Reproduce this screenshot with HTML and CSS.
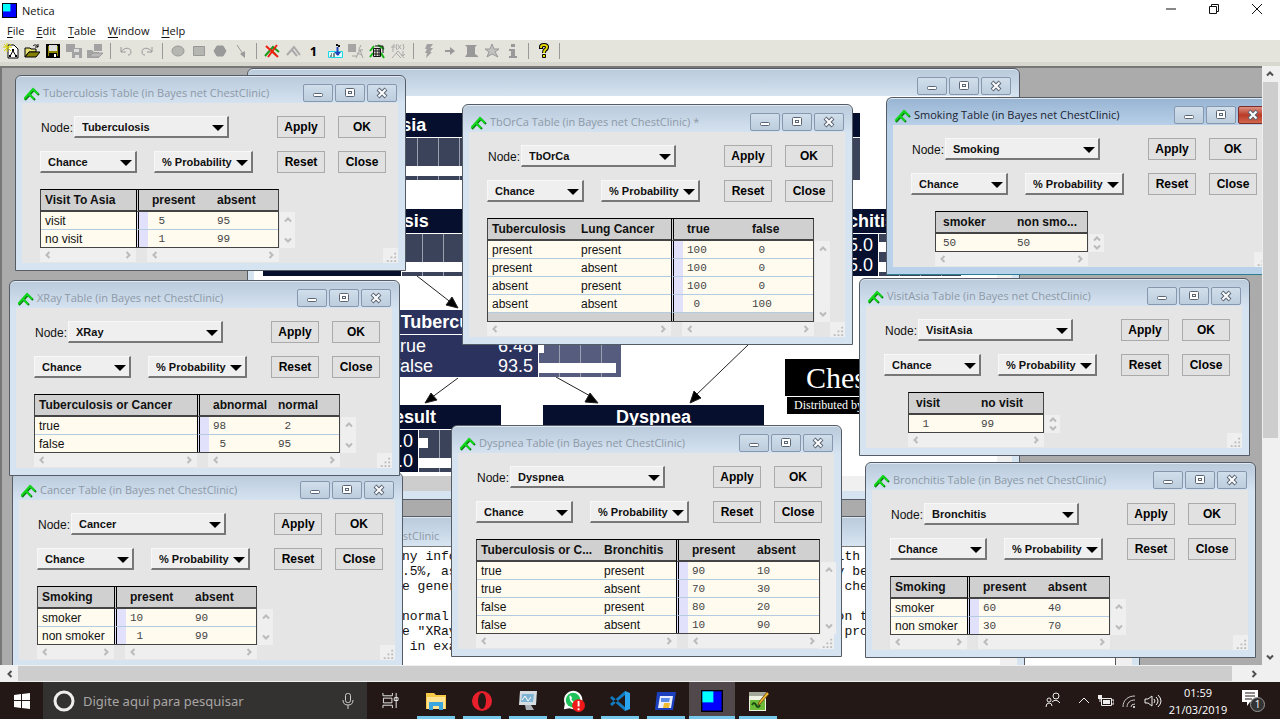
FILE: index.html
```html
<!DOCTYPE html>
<html lang="en">
<head>
<meta charset="utf-8">
<title>Netica</title>
<link rel="stylesheet" href="styles.css">
</head>
<body>
<svg class="defs" aria-hidden="true">
  <symbol id="net" viewBox="0 0 16 14"><path d="M1 13 10 3l5 5M6 8l5 5" fill="none" stroke="#0a7d12" stroke-width="2"/><path d="M0 12 9 2l5 5M5 7l5 5" fill="none" stroke="#12d81c" stroke-width="2"/></symbol>
  <symbol id="min" viewBox="0 0 16 12"><rect x="3.500" y="6.500" width="9" height="3" rx="1" fill="#fff" stroke="#5b6473"/></symbol>
  <symbol id="max" viewBox="0 0 16 12"><rect x="3.500" y="1.500" width="9" height="8" rx="1" fill="#fff" stroke="#5b6473"/><rect x="6.500" y="4.500" width="3" height="2" fill="#fff" stroke="#5b6473"/></symbol>
  <symbol id="cls" viewBox="0 0 16 12"><path d="M4 2l8 8M12 2l-8 8" stroke="#5b6473" stroke-width="4"/><path d="M4.500 2.500l7 7M11.500 2.500l-7 7" stroke="#fff" stroke-width="2"/></symbol>
  <symbol id="lt" viewBox="0 0 8 8"><path d="M5.500 1 2.500 4l3 3" fill="none" stroke="currentColor" stroke-width="2"/></symbol>
  <symbol id="rt" viewBox="0 0 8 8"><path d="M2.500 1l3 3-3 3" fill="none" stroke="currentColor" stroke-width="2"/></symbol>
  <symbol id="up" viewBox="0 0 8 8"><path d="M1 5.500l3-3 3 3" fill="none" stroke="currentColor" stroke-width="2"/></symbol>
  <symbol id="dn" viewBox="0 0 8 8"><path d="M1 2.500l3 3 3-3" fill="none" stroke="currentColor" stroke-width="2"/></symbol>
  <symbol id="grip" viewBox="0 0 16 16"><path d="M12 5h2v2h-2zM12 9h2v2h-2zM12 13h2v2h-2zM8 9h2v2H8zM8 13h2v2H8zM4 13h2v2H4z" fill="#bbb"/></symbol>
  <symbol id="netica" viewBox="0 0 16 16"><path d="M0 0h16v16H0z" fill="#000"/><path d="M1 1h14v14H1z" fill="#00f"/><path d="M1 1h8v8H1z" fill="#0ff"/></symbol>
</svg>

<header class="titlebar">
  <svg class="app-icon"><use href="#netica"/></svg>
  <span class="app-name">Netica</span>
  <div class="sys">
    <button aria-label="Minimize"><svg viewBox="0 0 12 12"><path d="M1 6h10" stroke="#111"/></svg></button>
    <button aria-label="Restore"><svg viewBox="0 0 12 12"><path d="M1.500 3.500h7v7h-7zM3.500 3.500v-2h7v7h-2" fill="none" stroke="#111"/></svg></button>
    <button aria-label="Close"><svg viewBox="0 0 12 12"><path d="M1 1l10 10M11 1 1 11" stroke="#111"/></svg></button>
  </div>
</header>
<nav class="menu">
  <button><u>F</u>ile</button><button><u>E</u>dit</button><button><u>T</u>able</button><button><u>W</u>indow</button><button><u>H</u>elp</button>
</nav>
<div class="toolbar">
  <button aria-label="New"><svg viewBox="0 0 16 16"><path d="M5 2h6l4 4v9H5z" fill="#fff" stroke="#000"/><path d="M7 13l3-5 3 5" fill="none" stroke="#000"/><path d="M9 6h2v2H9zM6 12h2v2H6zM12 12h2v2h-2z"/><path d="M1 1l7 7M8 1 1 8M4 0v9M0 4h9" stroke="#d6d000"/></svg></button>
  <button aria-label="Open"><svg viewBox="0 0 16 16"><path d="M1 5h5l1 1h5v3H5l-4 5z" fill="#e6e070" stroke="#000"/><path d="M1 14l4-5h11l-4 5z" fill="#868000" stroke="#000"/><path d="M9 3c2-2 4-1 5 1M14 1v3h-3" fill="none" stroke="#000"/></svg></button>
  <button aria-label="Save"><svg viewBox="0 0 16 16"><path d="M2 2h12v12H2z" fill="#8a8600" stroke="#000" stroke-width="2"/><path d="M4 2h8v6H4z" fill="#ddd"/><path d="M4 10h8v4H4z" fill="#000"/><path d="M9 11h2v3H9z" fill="#fff"/></svg></button>
  <button aria-label="Save all"><svg viewBox="0 0 16 16"><path d="M0 1h9v8H0zM6 5h10v10H6z" fill="#a3a3a3"/><path d="M8 6h5v3H8zM9 12h4v3H9z" fill="#ddd"/></svg></button>
  <button aria-label="Open all"><svg viewBox="0 0 16 16"><path d="M0 7h5l2 2h5v6H0zM7 1h8v7H7z" fill="#a3a3a3"/><path d="M2 14l4-4h10l-4 4z" fill="#b9b9b9" stroke="#999"/></svg></button>
  <i></i>
  <button aria-label="Undo"><svg viewBox="0 0 16 16"><path d="M3 4v5h5M3 9c3-5 10-5 10 0 0 2-1 3-3 3" fill="none" stroke="#999"/></svg></button>
  <button aria-label="Redo"><svg viewBox="0 0 16 16"><path d="M13 4v5H8M13 9C10 4 3 4 3 9c0 2 1 3 3 3" fill="none" stroke="#999"/></svg></button>
  <i></i>
  <button aria-label="Nature node"><svg viewBox="0 0 16 16"><ellipse cx="8" cy="8" rx="6" ry="5" fill="#b5b5b1" stroke="#999"/></svg></button>
  <button aria-label="Decision node"><svg viewBox="0 0 16 16"><path d="M2.500 3.500h11v9h-11z" fill="#b5b5b1" stroke="#999"/></svg></button>
  <button aria-label="Utility node"><svg viewBox="0 0 16 16"><path d="M5 3h6l3 5-3 5H5L2 8z" fill="#999" stroke="#999"/></svg></button>
  <button aria-label="Link"><svg viewBox="0 0 16 16"><path d="M4 2l6 9" stroke="#999"/><path d="M12 8v7l-5-4z" fill="#999"/></svg></button>
  <i></i>
  <button aria-label="Remove findings"><svg viewBox="0 0 16 16"><path d="M1 13 9 4l6 5M7 7l5 5" fill="none" stroke="#1b991b" stroke-width="2"/><path d="M2 3l12 11M13 2 4 14" stroke="#f02010" stroke-width="2"/></svg></button>
  <button aria-label="Compile"><svg viewBox="0 0 16 16"><path d="M2 12l7-8 6 8M7 7l5 6" fill="none" stroke="#aaa" stroke-width="2"/></svg></button>
  <button class="one">1</button>
  <button aria-label="Sample"><svg viewBox="0 0 16 16"><path d="M1.500 8.500h14v6h-14z" fill="#dff" stroke="#1cd8e6"/><path d="M4 12v2M7 10v4M4 11h1" stroke="#222"/><path d="M10.500 4v8" stroke="#24b" stroke-width="2"/><path d="M7 9h7l-3 4z" fill="#24b"/><path d="M9 1h2v2H9zM11 2h2v2h-2z" fill="#111"/></svg></button>
  <button aria-label="Learn"><svg viewBox="0 0 16 16"><path d="M0 1h8v8H0z" fill="#a5a5a5"/><path d="M8 15l4-8 3 8M10 7h5M9 10l5 2M4 13h5M13 2l-2 4" fill="none" stroke="#a5a5a5"/></svg></button>
  <button aria-label="Equation"><svg viewBox="0 0 16 16"><path d="M1 14l3-4M12 10l3 5M1 8l4-5M9 2l6 4" stroke="#14b414" stroke-width="2"/><path d="M4.500 5.500h7v8h-7zM4 8h8M4 11h8M7 5v8M10 5v8M6 3h8v7" fill="none" stroke="#111"/></svg></button>
  <button aria-label="Function"><svg viewBox="0 0 16 16"><path d="M3 9V3q0-2 2-1M1 4h4M7 1q-2 3 0 6M8 2l3 4M11 2 8 6M13 1q2 3 0 6M2 15l6-7 6 7M6 10l5 5M13 8v5M11 11l2 2 2-2" fill="none" stroke="#aaa"/></svg></button>
  <i></i>
  <button aria-label="Run"><svg viewBox="0 0 16 16"><path d="M6 1h6L9 5h3l-3 4h2l-6 6 1-5H4l2-4H4z" fill="#a0a0a0"/></svg></button>
  <button aria-label="Forward"><svg viewBox="0 0 16 16"><path d="M3 8h6" stroke="#999" stroke-width="2"/><path d="M8 4l5 4-5 4z" fill="#999"/></svg></button>
  <button aria-label="Record"><svg viewBox="0 0 16 16"><path d="M2 2h12l-2 2v7l3 2v1H2l2-3V4z" fill="#999"/></svg></button>
  <button aria-label="Mark"><svg viewBox="0 0 16 16"><path d="M8 1l2 5h5l-4 3 3 5-6-3-5 3 2-5-4-3h5z" fill="#c2c2c2" stroke="#999"/></svg></button>
  <button aria-label="Info"><svg viewBox="0 0 16 16"><path d="M6 1h4v3H6zM4 6h6v7h2v2H4v-2h2V8H4z" fill="#999"/></svg></button>
  <i></i>
  <button aria-label="Help"><svg viewBox="0 0 16 16"><path d="M5 6V4q0-2 3-2t3 2q0 2-2 3-1 1-1 3" fill="none" stroke="#000" stroke-width="4"/><path d="M5 5V4q0-2 3-2t3 2q0 2-2 3-1 1-1 3" fill="none" stroke="#e0d800" stroke-width="2"/><path d="M6.500 11.500h3v3h-3z" fill="#eee000" stroke="#000"/></svg></button>
  <i></i>
</div>

<main class="mdi">
  <div class="view">
    <section class="win net-win">
      <div class="bar"><span></span><div class="ctl"><button aria-label="Minimize"><svg><use href="#min"/></svg></button><button aria-label="Maximize"><svg><use href="#max"/></svg></button><button aria-label="Close"><svg><use href="#cls"/></svg></button></div></div>
      <div class="net-body">
        <div class="canvas">
          <svg class="links" viewBox="0 0 743 380"><g stroke="#222" fill="#000"><path d="M163 180l36 28M495 248l-54 52M204 282l-27 20M302 281l36 20"/><path d="M204 212l-12-3 6-8zM436 307l4-12 7 7zM171 307l6-10 6 7zM344 307l-13-1 5-9z"/></g></svg>
          <div class="node n-asia"><h3>Visit To Asia</h3><div class="states"></div><div class="bars"><b style="width:1%"></b><b style="width:99%"></b></div></div>
          <div class="node n-tub"><h3>Tuberculosis</h3><div class="states"></div><div class="bars"><b style="width:1%"></b><b style="width:99%"></b></div></div>
          <div class="node n-smoke"><h3></h3><div class="states"></div><div class="bars"><b style="width:50%"></b><b style="width:50%"></b></div></div>
          <div class="node n-bron"><h3>Bronchitis</h3><div class="states"><p><span>45.0</span></p><p><span>55.0</span></p></div><div class="bars"><b style="width:45%"></b><b style="width:55%"></b></div></div>
          <div class="node n-or"><h3>Tuberculosis or Cancer</h3><div class="states"><p>true<span>6.48</span></p><p>false<span>93.5</span></p></div><div class="bars"><b style="width:6%"></b><b style="width:94%"></b></div></div>
          <div class="node n-xray"><h3>XRay Result</h3><div class="states"><p><span>11.0</span></p><p><span>89.0</span></p></div><div class="bars"><b style="width:11%"></b><b style="width:89%"></b></div></div>
          <div class="node n-dys"><h3>Dyspnea</h3><div class="states"></div><div class="bars"><b style="width:44%"></b><b style="width:56%"></b></div></div>
          <div class="caption"><h2>Chest Clinic</h2><p>Distributed by Norsys</p></div>
        </div>
        <div class="net-v"></div>
        <div class="net-h"><div></div></div>
      </div>
    </section>

    <section class="win back-win"><div class="paper"></div></section>
    <section class="win note-win">
      <div class="bar"><span class="t">ChestClinic</span></div>
      <div class="note"><pre>ny info
.5%, as
e gener

normal
e "XRay
 in exa</pre><pre>ith
y be
 che

on t
 pro</pre></div>
    </section>

    <section class="win dlg cancer">
      <div class="bar"><svg class="ic"><use href="#net"/></svg><span class="t">Cancer Table (in Bayes net ChestClinic)</span><div class="ctl"><button aria-label="Minimize"><svg><use href="#min"/></svg></button><button aria-label="Maximize"><svg><use href="#max"/></svg></button><button aria-label="Close"><svg><use href="#cls"/></svg></button></div></div>
      <div class="client">
        <div class="row"><label for="n1">Node:</label><div class="sel wide"><select id="n1"><option>Cancer</option></select></div><div class="btns"><button>Apply</button><button>OK</button></div></div>
        <div class="row second"><div class="sel"><select aria-label="Kind"><option>Chance</option></select></div><div class="sel pct"><select aria-label="Units"><option>% Probability</option></select></div><div class="btns"><button>Reset</button><button>Close</button></div></div>
        <div class="sheet"><div class="grid">
          <table><colgroup><col class="k1"><col class="g"><col class="v"><col></colgroup><tr><th>Smoking</th><th class="d"></th><th>present</th><th>absent</th></tr><tr><td>smoker</td><td class="d"></td><td class="n">10</td><td class="n">90</td></tr><tr><td>non smoker</td><td class="d"></td><td class="n"> 1</td><td class="n">99</td></tr></table>
          <div class="hs"><div class="hb left"><svg><use href="#lt"/></svg><svg><use href="#rt"/></svg></div><div class="hb"><svg><use href="#lt"/></svg><svg><use href="#rt"/></svg></div></div></div>
          <div class="vb"><svg><use href="#up"/></svg><svg><use href="#dn"/></svg></div></div>
        <svg class="grip"><use href="#grip"/></svg>
      </div>
    </section>

    <section class="win dlg xray">
      <div class="bar"><svg class="ic"><use href="#net"/></svg><span class="t">XRay Table (in Bayes net ChestClinic)</span><div class="ctl"><button aria-label="Minimize"><svg><use href="#min"/></svg></button><button aria-label="Maximize"><svg><use href="#max"/></svg></button><button aria-label="Close"><svg><use href="#cls"/></svg></button></div></div>
      <div class="client">
        <div class="row"><label for="n2">Node:</label><div class="sel wide"><select id="n2"><option>XRay</option></select></div><div class="btns"><button>Apply</button><button>OK</button></div></div>
        <div class="row second"><div class="sel"><select aria-label="Kind"><option>Chance</option></select></div><div class="sel pct"><select aria-label="Units"><option>% Probability</option></select></div><div class="btns"><button>Reset</button><button>Close</button></div></div>
        <div class="sheet"><div class="grid">
          <table><colgroup><col class="k1"><col class="g"><col class="v"><col></colgroup><tr><th>Tuberculosis or Cancer</th><th class="d"></th><th>abnormal</th><th>normal</th></tr><tr><td>true</td><td class="d"></td><td class="n">98</td><td class="n"> 2</td></tr><tr><td>false</td><td class="d"></td><td class="n"> 5</td><td class="n">95</td></tr></table>
          <div class="hs"><div class="hb left"><svg><use href="#lt"/></svg><svg><use href="#rt"/></svg></div><div class="hb"><svg><use href="#lt"/></svg><svg><use href="#rt"/></svg></div></div></div>
          <div class="vb"><svg><use href="#up"/></svg><svg><use href="#dn"/></svg></div></div>
        <svg class="grip"><use href="#grip"/></svg>
      </div>
    </section>

    <section class="win dlg tub">
      <div class="bar"><svg class="ic"><use href="#net"/></svg><span class="t">Tuberculosis Table (in Bayes net ChestClinic)</span><div class="ctl"><button aria-label="Minimize"><svg><use href="#min"/></svg></button><button aria-label="Maximize"><svg><use href="#max"/></svg></button><button aria-label="Close"><svg><use href="#cls"/></svg></button></div></div>
      <div class="client">
        <div class="row"><label for="n3">Node:</label><div class="sel wide"><select id="n3"><option>Tuberculosis</option></select></div><div class="btns"><button>Apply</button><button>OK</button></div></div>
        <div class="row second"><div class="sel"><select aria-label="Kind"><option>Chance</option></select></div><div class="sel pct"><select aria-label="Units"><option>% Probability</option></select></div><div class="btns"><button>Reset</button><button>Close</button></div></div>
        <div class="sheet"><div class="grid">
          <table><colgroup><col class="k1"><col class="g"><col class="v"><col></colgroup><tr><th>Visit To Asia</th><th class="d"></th><th>present</th><th>absent</th></tr><tr><td>visit</td><td class="d"></td><td class="n"> 5</td><td class="n">95</td></tr><tr><td>no visit</td><td class="d"></td><td class="n"> 1</td><td class="n">99</td></tr></table>
          <div class="hs"><div class="hb left"><svg><use href="#lt"/></svg><svg><use href="#rt"/></svg></div><div class="hb"><svg><use href="#lt"/></svg><svg><use href="#rt"/></svg></div></div></div>
          <div class="vb"><svg><use href="#up"/></svg><svg><use href="#dn"/></svg></div></div>
        <svg class="grip"><use href="#grip"/></svg>
      </div>
    </section>

    <section class="win dlg tborca">
      <div class="bar"><svg class="ic"><use href="#net"/></svg><span class="t">TbOrCa Table (in Bayes net ChestClinic) *</span><div class="ctl"><button aria-label="Minimize"><svg><use href="#min"/></svg></button><button aria-label="Maximize"><svg><use href="#max"/></svg></button><button aria-label="Close"><svg><use href="#cls"/></svg></button></div></div>
      <div class="client">
        <div class="row"><label for="n4">Node:</label><div class="sel wide"><select id="n4"><option>TbOrCa</option></select></div><div class="btns"><button>Apply</button><button>OK</button></div></div>
        <div class="row second"><div class="sel"><select aria-label="Kind"><option>Chance</option></select></div><div class="sel pct"><select aria-label="Units"><option>% Probability</option></select></div><div class="btns"><button>Reset</button><button>Close</button></div></div>
        <div class="sheet"><div class="grid">
          <table><colgroup><col class="k1"><col class="k2"><col class="g"><col class="v"><col></colgroup><tr><th>Tuberculosis</th><th>Lung Cancer</th><th class="d"></th><th>true</th><th>false</th></tr><tr><td>present</td><td>present</td><td class="d"></td><td class="n">100</td><td class="n"> 0</td></tr><tr><td>present</td><td>absent</td><td class="d"></td><td class="n">100</td><td class="n"> 0</td></tr><tr><td>absent</td><td>present</td><td class="d"></td><td class="n">100</td><td class="n"> 0</td></tr><tr><td>absent</td><td>absent</td><td class="d"></td><td class="n"> 0</td><td class="n">100</td></tr><tr class="spare"><td></td><td></td><td class="d"></td><td></td><td></td></tr></table>
          <div class="hs"><div class="hb left"><svg><use href="#lt"/></svg><svg><use href="#rt"/></svg></div><div class="hb"><svg><use href="#lt"/></svg><svg><use href="#rt"/></svg></div></div></div>
          <div class="vb"><svg><use href="#up"/></svg><svg><use href="#dn"/></svg></div></div>
        <svg class="grip"><use href="#grip"/></svg>
      </div>
    </section>

    <section class="win dlg dysp">
      <div class="bar"><svg class="ic"><use href="#net"/></svg><span class="t">Dyspnea Table (in Bayes net ChestClinic)</span><div class="ctl"><button aria-label="Minimize"><svg><use href="#min"/></svg></button><button aria-label="Maximize"><svg><use href="#max"/></svg></button><button aria-label="Close"><svg><use href="#cls"/></svg></button></div></div>
      <div class="client">
        <div class="row"><label for="n5">Node:</label><div class="sel wide"><select id="n5"><option>Dyspnea</option></select></div><div class="btns"><button>Apply</button><button>OK</button></div></div>
        <div class="row second"><div class="sel"><select aria-label="Kind"><option>Chance</option></select></div><div class="sel pct"><select aria-label="Units"><option>% Probability</option></select></div><div class="btns"><button>Reset</button><button>Close</button></div></div>
        <div class="sheet"><div class="grid">
          <table><colgroup><col class="k1"><col class="k2"><col class="g"><col class="v"><col></colgroup><tr><th>Tuberculosis or C...</th><th>Bronchitis</th><th class="d"></th><th>present</th><th>absent</th></tr><tr><td>true</td><td>present</td><td class="d"></td><td class="n">90</td><td class="n">10</td></tr><tr><td>true</td><td>absent</td><td class="d"></td><td class="n">70</td><td class="n">30</td></tr><tr><td>false</td><td>present</td><td class="d"></td><td class="n">80</td><td class="n">20</td></tr><tr><td>false</td><td>absent</td><td class="d"></td><td class="n">10</td><td class="n">90</td></tr></table>
          <div class="hs"><div class="hb left"><svg><use href="#lt"/></svg><svg><use href="#rt"/></svg></div><div class="hb"><svg><use href="#lt"/></svg><svg><use href="#rt"/></svg></div></div></div>
          <div class="vb"><svg><use href="#up"/></svg><svg><use href="#dn"/></svg></div></div>
        <svg class="grip"><use href="#grip"/></svg>
      </div>
    </section>

    <section class="win dlg plain asia">
      <div class="bar"><svg class="ic"><use href="#net"/></svg><span class="t">VisitAsia Table (in Bayes net ChestClinic)</span><div class="ctl"><button aria-label="Minimize"><svg><use href="#min"/></svg></button><button aria-label="Maximize"><svg><use href="#max"/></svg></button><button aria-label="Close"><svg><use href="#cls"/></svg></button></div></div>
      <div class="client">
        <div class="row"><label for="n6">Node:</label><div class="sel wide"><select id="n6"><option>VisitAsia</option></select></div><div class="btns"><button>Apply</button><button>OK</button></div></div>
        <div class="row second"><div class="sel"><select aria-label="Kind"><option>Chance</option></select></div><div class="sel pct"><select aria-label="Units"><option>% Probability</option></select></div><div class="btns"><button>Reset</button><button>Close</button></div></div>
        <div class="sheet"><div class="grid">
          <table><colgroup><col class="k1"><col></colgroup><tr><th>visit</th><th>no visit</th></tr><tr><td class="n"> 1</td><td class="n">99</td></tr></table>
          <div class="hs"><div class="hb"><svg><use href="#lt"/></svg><svg><use href="#rt"/></svg></div></div></div>
          <div class="vb"><svg><use href="#up"/></svg><svg><use href="#dn"/></svg></div></div>
        <svg class="grip"><use href="#grip"/></svg>
      </div>
    </section>

    <section class="win dlg bron">
      <div class="bar"><svg class="ic"><use href="#net"/></svg><span class="t">Bronchitis Table (in Bayes net ChestClinic)</span><div class="ctl"><button aria-label="Minimize"><svg><use href="#min"/></svg></button><button aria-label="Maximize"><svg><use href="#max"/></svg></button><button aria-label="Close"><svg><use href="#cls"/></svg></button></div></div>
      <div class="client">
        <div class="row"><label for="n7">Node:</label><div class="sel wide"><select id="n7"><option>Bronchitis</option></select></div><div class="btns"><button>Apply</button><button>OK</button></div></div>
        <div class="row second"><div class="sel"><select aria-label="Kind"><option>Chance</option></select></div><div class="sel pct"><select aria-label="Units"><option>% Probability</option></select></div><div class="btns"><button>Reset</button><button>Close</button></div></div>
        <div class="sheet"><div class="grid">
          <table><colgroup><col class="k1"><col class="g"><col class="v"><col></colgroup><tr><th>Smoking</th><th class="d"></th><th>present</th><th>absent</th></tr><tr><td>smoker</td><td class="d"></td><td class="n">60</td><td class="n">40</td></tr><tr><td>non smoker</td><td class="d"></td><td class="n">30</td><td class="n">70</td></tr></table>
          <div class="hs"><div class="hb left"><svg><use href="#lt"/></svg><svg><use href="#rt"/></svg></div><div class="hb"><svg><use href="#lt"/></svg><svg><use href="#rt"/></svg></div></div></div>
          <div class="vb"><svg><use href="#up"/></svg><svg><use href="#dn"/></svg></div></div>
        <svg class="grip"><use href="#grip"/></svg>
      </div>
    </section>

    <section class="win dlg plain smoke active">
      <div class="bar"><svg class="ic"><use href="#net"/></svg><span class="t">Smoking Table (in Bayes net ChestClinic)</span><div class="ctl"><button aria-label="Minimize"><svg><use href="#min"/></svg></button><button aria-label="Maximize"><svg><use href="#max"/></svg></button><button class="red" aria-label="Close"><svg><use href="#cls"/></svg></button></div></div>
      <div class="client">
        <div class="row"><label for="n8">Node:</label><div class="sel wide"><select id="n8"><option>Smoking</option></select></div><div class="btns"><button>Apply</button><button>OK</button></div></div>
        <div class="row second"><div class="sel"><select aria-label="Kind"><option>Chance</option></select></div><div class="sel pct"><select aria-label="Units"><option>% Probability</option></select></div><div class="btns"><button>Reset</button><button>Close</button></div></div>
        <div class="sheet"><div class="grid">
          <table><colgroup><col class="k1"><col></colgroup><tr><th>smoker</th><th>non smo...</th></tr><tr><td class="n">50</td><td class="n">50</td></tr></table>
          <div class="hs"><div class="hb"><svg><use href="#lt"/></svg><svg><use href="#rt"/></svg></div></div></div>
          <div class="vb"><svg><use href="#up"/></svg><svg><use href="#dn"/></svg></div></div>
        <svg class="grip"><use href="#grip"/></svg>
      </div>
    </section>
  </div>
  <div class="mv"><svg><use href="#up"/></svg><div class="thumb"></div><svg><use href="#dn"/></svg></div>
  <div class="mh"><svg><use href="#lt"/></svg><div class="thumb"></div><svg><use href="#rt"/></svg></div>
</main>

<footer class="taskbar">
  <button class="start" aria-label="Start"><svg viewBox="0 0 16 16"><path d="M0 2l7-1v6H0zM8 1l8-1v7H8zM0 8h7v7l-7-1zM8 8h8v8l-8-1z" fill="#fff"/></svg></button>
  <label class="search"><svg viewBox="0 0 22 22"><circle cx="11" cy="11" r="9" fill="none" stroke="#eee" stroke-width="3"/></svg><input type="text" placeholder="Digite aqui para pesquisar"><svg class="mic" viewBox="0 0 16 18"><rect x="5.500" y="1.500" width="5" height="9" rx="2" fill="none" stroke="#ccc"/><path d="M3 8q0 5 5 5t5-5M8 13v4" fill="none" stroke="#ccc"/></svg></label>
  <button class="app view-btn" aria-label="Task view"><svg viewBox="0 0 18 18"><path d="M1 1v3h10V1M1 17v-3h10v3M1.500 6.500h9v5h-9zM15 1v16M13 6h4v3h-4z" fill="none" stroke="#eee"/></svg></button>
  <button class="app on" aria-label="Explorer"><svg viewBox="0 0 22 22"><path d="M1 3h8l2 2h10v14H1z" fill="#f7c948"/><path d="M2 7h18v12H2z" fill="#ffe391"/><path d="M4 12h14v8h-4v-4H8v4H4z" fill="#3ba5de"/></svg></button>
  <button class="app on" aria-label="Opera"><svg viewBox="0 0 22 22"><ellipse cx="11" cy="11" rx="10" ry="10" fill="#e8202c"/><ellipse cx="11" cy="11" rx="4" ry="8" fill="#231816"/></svg></button>
  <button class="app on" aria-label="Monitor"><svg viewBox="0 0 22 22"><path d="M3 1h17l-1 14H2z" fill="#d6dde2"/><path d="M5 4h12l-1 8H4z" fill="#7fb3d3"/><path d="M5 10l3-4 3 5 3-4" fill="none" stroke="#fff"/><path d="M8 15h6l3 5H9z" fill="#aab2b8"/></svg></button>
  <button class="app on" aria-label="WhatsApp"><svg viewBox="0 0 24 24"><path d="M1 21l1-6a10 10 0 1 1 5 5z" fill="#fff"/><circle cx="11" cy="11" r="8" fill="#1fc15a"/><path d="M7 7q1-2 2 0l1 2-1 1q1 2 3 3l1-1 3 1q0 3-4 2-5-2-5-8z" fill="#fff"/><circle cx="17" cy="17" r="7" fill="#f01818"/><path d="M17 12v6M17 20v2" stroke="#fff" stroke-width="2"/></svg></button>
  <button class="app on" aria-label="Code"><svg viewBox="0 0 22 22"><path d="M16 1l5 2v16l-5 2z" fill="#2aa4ee"/><path d="M16 5 3 16l-2-2L16 1zM16 17 3 6 1 8l15 13z" fill="#117cc4"/></svg></button>
  <button class="app on" aria-label="Editor"><svg viewBox="0 0 22 22"><path d="M2 2h19l-3 18H0z" fill="#1c3fbd"/><path d="M5 6h13l-2 12H3z" fill="#e8eeff"/><path d="M6 8h9l-1 4H6z" fill="#5b8be8"/><path d="M9 13h6l-1 5H8z" fill="#efbb32"/></svg></button>
  <button class="app on cur" aria-label="Netica"><svg><use href="#netica"/></svg></button>
  <button class="app on" aria-label="Notepad++"><svg viewBox="0 0 22 22"><path d="M2 2h17v19H2z" fill="#eef3e4"/><path d="M2 2h17v4H2z" fill="#a4a99c"/><path d="M3 10h15v10H3z" fill="#6dbb38"/><path d="M5 15q2-4 4 0t4 0" fill="none" stroke="#184c14" stroke-width="2"/><path d="M20 2l2 2-9 10-2 1 1-3z" fill="#f0b92c" stroke="#77551b"/></svg></button>
  <div class="tray">
    <svg viewBox="0 0 18 18"><circle cx="12" cy="4" r="3" fill="none" stroke="#eee"/><circle cx="5" cy="8" r="2" fill="none" stroke="#eee"/><path d="M2 15q0-4 3-4t3 3M8 10q4-4 8 1" fill="none" stroke="#eee"/></svg>
    <svg class="chev" viewBox="0 0 12 12"><path d="M1 8l5-5 5 5" fill="none" stroke="#eee"/></svg>
    <svg viewBox="0 0 18 18"><path d="M5.500 6.500h10v7h-10zM16 8h2v4h-2" fill="none" stroke="#eee"/><path d="M7 8h7v4H7zM2 3h4v4H2z" fill="#eee"/><path d="M4 7v3" stroke="#eee"/></svg>
    <svg viewBox="0 0 18 18"><path d="M3 15C3 8 8 4 15 4M7 15c0-4 3-7 8-7M11 15q0-3 4-3" fill="none" stroke="#ccc"/><circle cx="14" cy="15" r="1" fill="#fff"/></svg>
    <svg viewBox="0 0 18 18"><path d="M1 7h3l4-3v10l-4-3H1zM10 7q2 2 0 4M12 5q4 4 0 8M14 3q6 6 0 12" fill="none" stroke="#eee"/></svg>
    <div class="clock"><span>01:59</span><span>21/03/2019</span></div>
    <div class="notif"><svg viewBox="0 0 18 18"><path d="M1 1h16v12h-8l-3 4v-4H1z" fill="#fff"/><path d="M4 4h10M4 7h10M4 10h7" stroke="#231816"/></svg><span>1</span></div>
  </div>
</footer>
</body>
</html>
```
FILE: styles.css
```css
* { box-sizing: border-box; }
body {
  margin: 0;
  height: 100vh;
  display: flex;
  flex-direction: column;
  overflow: hidden;
  background: #fff;
  color: #111;
  font: 12px/16px "Liberation Sans", Arial, sans-serif;
}
button { font: inherit; color: inherit; padding: 0; border: 0; background: none; }
h2, h3, p, pre { margin: 0; }
.defs { position: absolute; width: 0; height: 0; }

/* Application frame */
.titlebar { display: flex; align-items: center; height: 21px; padding-left: 2px; font: 11px/16px "Open Sans", sans-serif; }
.app-icon { width: 15px; height: 15px; }
.app-name { margin-left: 5px; }
.sys { display: flex; margin-left: auto; padding-right: 2px; }
.sys button { width: 43px; height: 20px; }
.sys svg { width: 12px; height: 12px; }
.menu { display: flex; height: 19px; padding-left: 7px; gap: 12px; font: 11px/18px "Open Sans", sans-serif; }
.menu u { text-underline-offset: 2px; }
.toolbar { display: flex; align-items: center; height: 22px; background: #e4e3dc; }
.toolbar button { width: 21px; height: 20px; display: grid; place-items: center; }
.toolbar svg { width: 16px; height: 16px; }
.toolbar i { width: 10px; height: 16px; background: linear-gradient(#999, #999) 5px 0 / 1px 100% no-repeat; }
.toolbar .one { font: bold 13px/18px "Noto Sans", sans-serif; color: #000; }

/* Document area */
.mdi { flex: 1; min-height: 0; display: grid; grid-template: 1fr 17px / 1fr 18px; border-top: 4px solid #d8d7d0; background: #f0f0f0; }
.view { position: relative; overflow: hidden; background: #ababab; box-shadow: inset 2px 2px #777; }
.mv, .mh { display: flex; align-items: center; background: #f0f0f0; color: #505050; }
.mv { flex-direction: column; padding-right: 2px; }
.mh { padding-left: 2px; }
.mv svg, .mh svg { width: 8px; height: 8px; margin: 4px; flex: none; }
.mv .thumb { width: 15px; height: 356px; margin-bottom: auto; background: #cdcdcd; }
.mh .thumb { flex: 1; height: 15px; margin-right: 14px; background: #cdcdcd; }

/* Child windows */
.win { position: absolute; padding: 0 7px 7px 6px; border: 1px solid #555c66; border-radius: 6px 6px 0 0; background: linear-gradient(#b9cadb, #d6e3f1 28px); box-shadow: inset 0 1px #dfe9f3; }
.bar { display: flex; height: 27px; padding: 8px 1px 0 2px; font: 11px/18px "Open Sans", sans-serif; color: #8d99a7; white-space: nowrap; }
.bar .ic { width: 16px; height: 14px; margin: 3px 3px 0 0; }
.ctl { display: flex; gap: 2px; margin-left: auto; }
.ctl button { width: 30px; height: 18px; display: grid; place-items: center; border: 1px solid #8798ae; border-radius: 2px; background: linear-gradient(#d1deeb, #bccddd); }
.ctl svg { width: 16px; height: 12px; }
.active { background: linear-gradient(#97b4d2, #b9d1e9 28px); border-bottom-color: #287f92; }
.active .bar { color: #1b2432; }
.ctl .red { background: linear-gradient(#dd9384, #bb3a28 50%, #d0674d); border-color: #7c2b2b; }

.dlg { width: 391px; }
.client { position: relative; padding: 13px 0 1px 18px; background: #e5e5e5; }
.row { display: flex; height: 22px; padding-right: 12px; }
.row label { width: 34px; padding-left: 1px; line-height: 24px; }
.second { margin: 13px 0 16px; }
.btns { display: flex; gap: 13px; margin-left: auto; }
.btns button { width: 48px; border: 1px solid #aaa; background: #e1e1e1; color: #000; font-weight: bold; font-size: 12px; }
.sel { position: relative; width: 97px; }
.sel.wide { width: 155px; }
.sel.pct { width: 99px; margin-left: 17px; }
.sel::after { content: ""; position: absolute; right: 5px; top: 9px; border: 6px solid transparent; border-top-color: #000; border-bottom: 0; pointer-events: none; }
.sel select { appearance: none; width: 100%; height: 22px; margin: 0; padding: 0 0 0 7px; border: 1px solid #f8f8f8; border-right: 2px solid #777; border-bottom: 2px solid #777; border-radius: 0; background: #efefef; color: #111; font: bold 11px/18px "Liberation Sans", Arial, sans-serif; }

.sheet { display: flex; }
.grid { flex: none; width: var(--tw); }
table { width: 100%; table-layout: fixed; border: 1px solid #444; border-top-color: #000; border-spacing: 0; background: #fffbef; }
.k1 { width: var(--k1); }
.k2 { width: var(--k2); }
.g { width: 12px; }
.v { width: 65px; }
th, td { height: 18px; padding: 0 0 0 4px; text-align: left; white-space: pre; line-height: 16px; }
th { height: 22px; background: #d0d0d0; border-bottom: 2px solid #444; overflow: visible; }
td { border-bottom: 1px solid #b4cbe2; }
tr:last-child td { height: 17px; border-bottom: 0; }
td.n { font: 11px/16px "Liberation Mono", monospace; color: #444; }
th.d, td.d { padding: 0; border-left: 3px double #000; }
td.d { background: #e2e1fb; }
.spare td, .spare td.d { height: 8px !important; line-height: 6px; background: #d0d0d0; }
.hs { display: flex; height: 14px; gap: 11px; }
.hb { flex: 1; display: flex; align-items: center; justify-content: space-between; padding: 0 4px; background: #efefef; color: #bbb; }
.hb.left { flex: none; width: var(--lw); }
.hb svg, .vb svg { width: 8px; height: 8px; }
.vb { display: flex; flex: none; flex-direction: column; align-items: center; justify-content: space-between; width: 15px; margin: 23px 0 14px 1px; padding: 4px 0; background: #efefef; color: #bbb; }
.grip { position: absolute; right: 0; bottom: 0; width: 15px; height: 15px; background: #efefef; }
.plain .sheet { padding-left: 24px; }
.plain th, .plain td { padding-left: 7px; }
.plain .vb { padding: 1px 0; }

.tub { left: 15px; top: 9px; --tw: 239px; --k1: 95px; --lw: 96px; }
.tborca { left: 462px; top: 38px; --tw: 327px; --k1: 89px; --k2: 94px; --lw: 184px; }
.xray { left: 9px; top: 214px; --tw: 306px; --k1: 162px; --lw: 163px; }
.cancer { left: 12px; top: 406px; --tw: 220px; --k1: 76px; --lw: 77px; }
.dysp { left: 451px; top: 359px; --tw: 344px; --k1: 123px; --k2: 76px; --lw: 201px; }
.asia { left: 859px; top: 212px; --tw: 136px; --k1: 65px; }
.bron { left: 865px; top: 396px; --tw: 220px; --k1: 76px; --lw: 77px; }
.smoke { left: 886px; top: 31px; --tw: 153px; --k1: 74px; }

/* Bayes net window; nodes sit on a free canvas */
.net-win { left: 247px; top: 2px; width: 773px; height: 432px; }
.net-body { display: grid; grid-template: 380px 15px / 1fr 15px; }
.canvas { position: relative; overflow: hidden; background: #fff; }
.net-v, .net-h { background: #f0f0f0; }
.net-h { grid-column: 1 / 3; }
.net-h div { width: 70%; height: 15px; background: #cdcdcd; }
.links { position: absolute; inset: 0; width: 743px; height: 380px; }
.node { position: absolute; width: 221px; display: grid; grid-template: 24px 43px / 1fr 83px; color: #fff; background: #060f2d; }
.node h3 { grid-column: 1 / 3; font: bold 18px/24px "Liberation Sans", Arial, sans-serif; text-align: center; white-space: nowrap; }
.states { padding: 1px 5px 0 7px; border-top: 1px solid #fff; font-size: 18px; line-height: 20px; }
.states p { display: flex; white-space: nowrap; }
.states span { margin-left: auto; }
.bars { display: grid; align-content: start; gap: 10px; padding: 8px 0; border: solid #fff; border-width: 1px 0 0 1px; background: repeating-linear-gradient(90deg, transparent 0 20px, #9aa0b0 20px 21px) #3b435a; }
.bars b { height: 10px; background: #fff; }
.n-asia { left: 4px; top: 17px; width: 231px; grid-template-columns: 1fr 93px; }
.n-tub { left: 9px; top: 113px; }
.n-smoke { left: 385px; top: 17px; }
.n-bron { left: 486px; top: 113px; }
.n-or { left: 126px; top: 214px; width: 241px; background: #2b325d; }
.n-or .states { padding-left: 15px; }
.n-or .bars { background-color: #565c7e; }
.n-xray { left: 12px; top: 309px; width: 235px; }
.n-dys { left: 289px; top: 309px; }
.caption { position: absolute; left: 531px; top: 263px; width: 190px; color: #fff; font-family: "Liberation Serif", serif; }
.caption h2 { padding-left: 21px; background: #000; font-size: 30px; font-weight: normal; line-height: 37px; }
.caption p { margin: 1px 2px; padding-left: 7px; background: #000; font-size: 12px; line-height: 17px; }

.back-win { left: 500px; top: 560px; width: 640px; height: 90px; }
.paper { height: 80px; background: linear-gradient(90deg, #fff calc(100% - 17px), #555 0 calc(100% - 16px), #f0f0f0 0); }
.note-win { left: 300px; top: 450px; width: 725px; height: 190px; }
.note-win .bar { height: 29px; padding: 10px 0 0 76px; }
.note { display: flex; gap: 380px; height: 150px; padding: 2px 0 0 95px; border-top: 1px solid #777; background: linear-gradient(90deg, #fff calc(100% - 17px), #f0f0f0 0); }
.note pre { font: 13px/15px "Liberation Mono", monospace; }

/* Taskbar */
.taskbar { display: flex; height: 37px; background: #231816; color: #fff; font: 12px/16px "Open Sans", sans-serif; }
.start { display: grid; place-items: center; width: 43px; }
.start svg { width: 16px; height: 16px; }
.search { display: flex; align-items: center; width: 324px; padding: 0 11px 0 10px; background: #343231; }
.search svg { width: 22px; height: 22px; }
.search input { flex: 1; min-width: 0; padding: 0 8px; border: 0; outline: 0; background: none; color: #fff; font: 13px/18px "Noto Sans", sans-serif; }
.search input::placeholder { color: #a8a6a5; }
.search .mic { width: 16px; height: 18px; }
.app { width: 46px; display: grid; place-items: center; }
.app svg { width: 22px; height: 22px; }
.view-btn svg { width: 17px; height: 17px; }
.on { background: linear-gradient(#76c7ec, #76c7ec) bottom / 38px 3px no-repeat; }
.cur { background: linear-gradient(#76c7ec, #76c7ec) bottom / 46px 3px no-repeat #50484a; }
.tray { display: flex; align-items: center; gap: 6px; margin-left: auto; }
.tray svg { width: 18px; height: 18px; }
.tray .chev { width: 12px; height: 12px; margin-left: 10px; }
.clock { display: grid; width: 60px; text-align: center; font-size: 11px; line-height: 17px; }
.notif { display: flex; width: 46px; padding-left: 7px; }
.notif span { width: 15px; height: 15px; margin: 8px 0 0 -9px; border: 1px solid #999; border-radius: 8px; background: #333; font-size: 10px; line-height: 13px; text-align: center; }
```
